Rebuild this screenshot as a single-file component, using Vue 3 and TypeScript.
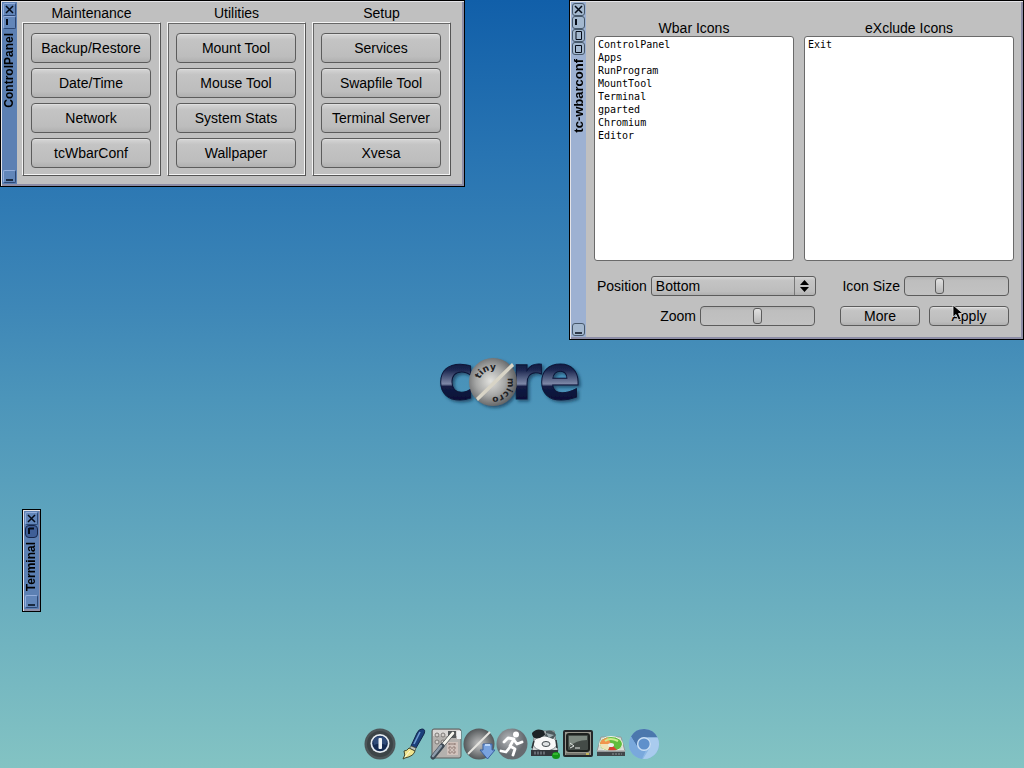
<script setup lang="ts">
import { ref } from 'vue'

interface Group {
  title: string
  tools: string[]
}

const groups: Group[] = [
  { title: 'Maintenance', tools: ['Backup/Restore', 'Date/Time', 'Network', 'tcWbarConf'] },
  { title: 'Utilities', tools: ['Mount Tool', 'Mouse Tool', 'System Stats', 'Wallpaper'] },
  { title: 'Setup', tools: ['Services', 'Swapfile Tool', 'Terminal Server', 'Xvesa'] },
]

const included = ['ControlPanel', 'Apps', 'RunProgram', 'MountTool', 'Terminal', 'gparted', 'Chromium', 'Editor']
const excluded = ['Exit']

const position = ref('Bottom')
const zoom = ref(50)
const iconSize = ref(32)
</script>

<template>
  <main class="desktop">
    <svg class="logo" viewBox="0 -10 150 80" role="img" aria-label="Tiny Core">
      <defs>
        <linearGradient id="steel" gradientUnits="userSpaceOnUse" x1="0" y1="6" x2="0" y2="46">
          <stop offset="0" stop-color="#0c1538" />
          <stop offset=".25" stop-color="#1c2750" />
          <stop offset=".6" stop-color="#7e89a8" />
          <stop offset=".66" stop-color="#141d44" />
          <stop offset="1" stop-color="#060e36" />
        </linearGradient>
        <radialGradient id="ball" cx=".45" cy=".48" r=".56">
          <stop offset="0" stop-color="#e2e2de" />
          <stop offset=".55" stop-color="#a5a6a5" />
          <stop offset="1" stop-color="#5c5e60" />
        </radialGradient>
        <filter id="soft" x="-10%" y="-10%" width="130%" height="140%">
          <feDropShadow dx="2" dy="2" stdDeviation="1.5" flood-color="#0c2f4d" flood-opacity=".65" />
        </filter>
        <path id="arc-top" d="M43 25 A14 14 0 0 1 70 28" />
        <path id="arc-bottom" d="M70 24 A14 14 0 0 1 50 41" />
      </defs>
      <g filter="url(#soft)">
        <text class="word" x="1" y="45">c</text>
        <text class="word" x="74" y="45">r</text>
        <text class="word" x="102" y="45">e</text>
        <circle cx="56" cy="28" r="24" fill="url(#ball)" />
        <path d="M39 44 L75 9 L77 12 L41 47 Z" fill="#d8d4c6" />
      </g>
      <text class="ring"><textPath href="#arc-top">tiny</textPath></text>
      <text class="ring"><textPath href="#arc-bottom">micro</textPath></text>
    </svg>

    <section class="window control" aria-label="ControlPanel">
      <header class="bar">
        <button class="tool" aria-label="Close"><svg viewBox="1 1 11 11"><path d="M3 3 L10 10 M10 3 L3 10" /></svg></button>
        <button class="tool" aria-label="Iconify"><svg viewBox="1 1 11 11"><path d="M4 3 V9" stroke-width="2" /></svg></button>
        <h1>ControlPanel</h1>
        <button class="tool foot" aria-label="Resize"><svg viewBox="1 1 11 11"><path d="M3 10 H10" /></svg></button>
      </header>
      <div class="groups">
        <section v-for="g in groups" :key="g.title" class="group">
          <h2>{{ g.title }}</h2>
          <div class="frame">
            <button v-for="t in g.tools" :key="t" class="push">{{ t }}</button>
          </div>
        </section>
      </div>
    </section>

    <section class="window wbar" aria-label="tc-wbarconf">
      <header class="bar active">
        <button class="tool" aria-label="Close"><svg viewBox="1 1 11 11"><path d="M3 3 L10 10 M10 3 L3 10" /></svg></button>
        <button class="tool" aria-label="Iconify"><svg viewBox="1 1 11 11"><path d="M4 3 V9" stroke-width="2" /></svg></button>
        <button class="tool" aria-label="Maximize height"><svg viewBox="1 1 11 11"><path d="M4 2.500 H9.500 V10.500 H4 Z" stroke-width="1" /></svg></button>
        <button class="tool" aria-label="Maximize"><svg viewBox="1 1 11 11"><path d="M3.500 3.500 H9.500 V10.500 H3.500 Z" stroke-width="1" /></svg></button>
        <h1>tc-wbarconf</h1>
        <button class="tool foot" aria-label="Resize"><svg viewBox="1 1 11 11"><path d="M3 10 H10" /></svg></button>
      </header>
      <form class="conf" @submit.prevent>
        <div class="lists">
          <div class="list">
            <label for="included">Wbar Icons</label>
            <select id="included" multiple size="17">
              <option v-for="i in included" :key="i">{{ i }}</option>
            </select>
          </div>
          <div class="list wide">
            <label for="excluded">eXclude Icons</label>
            <select id="excluded" multiple size="17">
              <option v-for="i in excluded" :key="i">{{ i }}</option>
            </select>
          </div>
        </div>
        <div class="row">
          <label for="position">Position</label>
          <span class="choice">
            <select id="position" v-model="position">
              <option>Bottom</option>
              <option>Top</option>
              <option>Left</option>
              <option>Right</option>
            </select>
            <svg viewBox="0 0 20 18" aria-hidden="true"><path d="M5 8 L9.500 3 L14 8 Z M5 10 L9.500 15 L14 10 Z" /></svg>
          </span>
          <label class="push-right" for="size">Icon Size</label>
          <input id="size" v-model.number="iconSize" class="narrow" type="range" min="0" max="100" />
        </div>
        <div class="row second">
          <label class="zoom-label" for="zoom">Zoom</label>
          <input id="zoom" v-model.number="zoom" type="range" min="0" max="100" />
          <span class="actions">
            <button class="push" type="button">More</button>
            <button class="push" type="submit">Apply</button>
          </span>
        </div>
      </form>
      <svg class="pointer" viewBox="0 0 12 18" aria-hidden="true">
        <path d="M1 1 V13 L4 10.500 L6.500 16 L9 15 L6.500 9.500 H11 Z" fill="#000" stroke="#e8e8e8" stroke-width=".8" />
      </svg>
    </section>

    <section class="window terminal" aria-label="Terminal">
      <header class="bar">
        <button class="tool" aria-label="Close"><svg viewBox="1 1 11 11"><path d="M3 3 L10 10 M10 3 L3 10" /></svg></button>
        <button class="tool pressed" aria-label="Restore"><svg viewBox="1 1 11 11"><path d="M4 3 V9 M4 3.500 H9" stroke-width="2" /></svg></button>
        <h1>Terminal</h1>
        <button class="tool foot" aria-label="Resize"><svg viewBox="1 1 11 11"><path d="M3 10 H10" /></svg></button>
      </header>
    </section>

    <nav class="dock" aria-label="Wbar">
      <button aria-label="Exit">
        <svg viewBox="0 0 32 32">
          <circle cx="16" cy="16" r="15.500" fill="#4d5659" />
          <circle cx="16" cy="16" r="13" fill="#3c4447" />
          <circle cx="16" cy="15.500" r="9.500" fill="#e4eaf0" />
          <circle cx="16" cy="15.500" r="7.800" fill="#142a52" />
          <path d="M9 13 A7.500 7.500 0 0 1 23 13 L22 17 Q16 14 10 17 Z" fill="#304b78" />
          <rect x="14.500" y="10" width="3.500" height="11" rx="1" fill="#eff3f6" />
        </svg>
      </button>
      <button aria-label="Editor">
        <svg viewBox="0 0 32 32">
          <path d="M25 1 Q29 1 27 6 L19 20 L14 18 L20 5 Q22 1 25 1 Z" fill="#1c3f7c" stroke="#12264a" />
          <path d="M23 4 L17 16" stroke="#6f9bd0" stroke-width="1.500" />
          <path d="M14 18 L19 20 L18 23 L12.500 20.500 Z" fill="#bfc3bd" stroke="#4b4d3c" stroke-width=".7" />
          <path d="M12 20 L18 23 Q17 28 8 30 L6 31 Q9 27 7 23 Q10 23 12 20 Z" fill="#efe48e" stroke="#44482f" />
          <path d="M13 23 L8 29" stroke="#fffbe0" />
        </svg>
      </button>
      <button aria-label="ControlPanel">
        <svg viewBox="0 0 32 32">
          <rect x="2" y="1" width="29" height="29" rx="2" fill="#b4b1ae" stroke="#5c5c5d" />
          <path d="M3 2 H30 V8 H3 Z" fill="#d9d7d5" />
          <rect x="18" y="3" width="8" height="7" fill="#54585a" />
          <rect x="27" y="3" width="4" height="8" fill="#edf0f2" />
          <g fill="#d4d0cd" stroke="#7d7976"><circle cx="7" cy="7" r="2" /><circle cx="13" cy="7" r="2" /><circle cx="7" cy="14" r="2" /><circle cx="13" cy="14" r="2" /></g>
          <rect x="17" y="14" width="11" height="13" fill="#d0c2bc" />
          <path d="M18 16 H27 M18 20 H27 M18 24 H27 M20 15 V27 M24 15 V27" stroke="#8f7a74" stroke-dasharray="2 1" />
          <path d="M23 5 L12 18" stroke="#34383a" stroke-width="4" stroke-linecap="round" />
          <path d="M23 5 L12 18" stroke="#f5f5ee" stroke-width="2.800" stroke-linecap="round" />
          <path d="M12 18 L3 29" stroke="#3d4954" stroke-width="5" stroke-linecap="round" />
          <path d="M11 18 L3 28" stroke="#8d9baa" stroke-width="2.500" stroke-linecap="round" />
        </svg>
      </button>
      <button aria-label="Apps">
        <svg viewBox="0 0 32 32">
          <defs><radialGradient id="apps-ball"><stop offset="0" stop-color="#c4c4c4" /><stop offset="1" stop-color="#54585a" /></radialGradient></defs>
          <circle cx="16" cy="16" r="15.500" fill="url(#apps-ball)" />
          <path d="M5 26 L27 4" stroke="#e5e4df" stroke-width="2" />
          <path d="M20 16 H29 V22 H32 L24.500 31 L17 22 H20 Z" fill="#79a3df" stroke="#3a609f" />
          <path d="M22 17 H27" stroke="#b9d5fa" stroke-width="2" />
        </svg>
      </button>
      <button aria-label="RunProgram">
        <svg viewBox="0 0 32 32">
          <defs><radialGradient id="run-ball" cx=".4" cy=".35"><stop offset="0" stop-color="#b7b9bc" /><stop offset="1" stop-color="#666b70" /></radialGradient></defs>
          <circle cx="16" cy="16" r="15.500" fill="url(#run-ball)" />
          <circle cx="20" cy="6.500" r="3" fill="#fff" />
          <path d="M18 11 L14 18 L19 21 L17 27 M14 19 L10 24 L5 23 M18 11 L12 10 L8 14 M18 12 L21 16 L26 14" fill="none" stroke="#fff" stroke-width="2.800" stroke-linecap="round" stroke-linejoin="round" />
        </svg>
      </button>
      <button aria-label="MountTool">
        <svg viewBox="0 0 32 32">
          <path d="M6 3 H25 L29 23 H3 Z" fill="#d3d6d7" stroke="#747b7e" />
          <ellipse cx="16" cy="15.500" rx="12" ry="7.500" fill="#f8f8f8" stroke="#7c8588" />
          <ellipse cx="17" cy="16" rx="4" ry="2.500" fill="#dfe2e3" stroke="#41484b" />
          <path d="M3 5 Q7 0 13 2 Q16 3 16 7 L11 10 Q3 12 3 5 Z" fill="#1d2326" />
          <path d="M17 3 Q24 1 27 7 L24 11 L16 8 Z" fill="#4b575b" />
          <path d="M17 5 L25 7 L20 10 Z" fill="#9caaae" />
          <path d="M5 13 L3 20 M27 12 L28 20" stroke="#2b3235" stroke-width="1.500" />
          <path d="M2 22 H29 V28 H2 Z" fill="#33363b" />
          <path d="M5 25 H17" stroke="#666b72" stroke-width="3" stroke-dasharray="2 1" />
          <ellipse cx="27" cy="27.500" rx="4" ry="3.500" fill="#129617" />
          <path d="M24 26 H29" stroke="#58d64e" />
        </svg>
      </button>
      <button aria-label="Terminal">
        <svg viewBox="0 0 32 32">
          <rect x="2" y="3" width="28" height="25" rx="1" fill="#99978f" stroke="#24272a" stroke-width="2" />
          <rect x="5" y="6" width="22" height="17" rx="2" fill="#444b47" stroke="#1e211f" stroke-width="2" />
          <path d="M7 8 H25 V12 Q14 12 7 19 Z" fill="#7e8981" />
          <path d="M8 15 L12 18 L8 20 M13 20 H18" fill="none" stroke="#e4e9e5" />
          <path d="M4 26 H28" stroke="#4f504b" />
          <rect x="24" y="25" width="3" height="2" fill="#c4b55b" />
        </svg>
      </button>
      <button aria-label="gparted">
        <svg viewBox="0 0 32 32">
          <path d="M6 9 H26 L30 23 H2 Z" fill="#dcded9" stroke="#929a9a" />
          <ellipse cx="16" cy="16" rx="11.500" ry="7.500" fill="#61bd3d" stroke="#f0f2ea" />
          <path d="M16 16 L5 16 A11 7 0 0 1 13 9.500 Z" fill="#f1944e" />
          <path d="M16 16 L5 16 A11 7 0 0 0 13 22.500 Z" fill="#efe3b8" />
          <path d="M16 16 L13 22.500 A11 7 0 0 0 22 22 Z" fill="#d64231" />
          <path d="M10 13 Q15 9 23 13" fill="none" stroke="#ccec8e" stroke-width="2" />
          <ellipse cx="16" cy="17" rx="3" ry="2" fill="#ecefec" />
          <path d="M2 22.500 H30 V28 H2 Z" fill="#41474a" />
          <path d="M2 23 H30" stroke="#eceeee" />
          <path d="M17 26 H27" stroke="#8a9294" stroke-dasharray="2 1" />
        </svg>
      </button>
      <button aria-label="Chromium">
        <svg viewBox="0 0 32 32">
          <circle cx="16" cy="16" r="15" fill="#8cb8e5" />
          <path d="M3 8.500 A15 15 0 0 1 29.500 9.500 L16 9.500 A7 7 0 0 0 10 20 Z" fill="#4b77ad" />
          <path d="M29.500 9.500 A15 15 0 0 1 15 31 L22 19.500 A7 7 0 0 0 19 9.500 Z" fill="#a9cbee" />
          <path d="M3 8.500 L10 20 Q14 24 18 22 L14 31 A15 15 0 0 1 3 8.500 Z" fill="#79a8dc" />
          <circle cx="16" cy="16" r="7" fill="#c9def4" />
          <circle cx="16" cy="16" r="5.600" fill="#5f90cb" />
        </svg>
      </button>
    </nav>
  </main>
</template>

<style>
body {
  margin: 0;
}
</style>

<style scoped>
.desktop {
  position: relative;
  box-sizing: border-box;
  min-height: 100vh;
  display: grid;
  place-items: center;
  overflow: hidden;
  background: linear-gradient(#115fa9, #2874b2 20%, #3e87b7 40%, #4c95ba 52%, #83c3c3);
  font-family: "Liberation Sans", Arial, sans-serif;
  font-size: 14px;
  color: #000;
}

button,
select,
input {
  font: inherit;
  color: inherit;
  margin: 0;
}

h1,
h2 {
  margin: 0;
  font-size: 14px;
  font-weight: normal;
}

.logo {
  width: 150px;
  height: 80px;
}

.word {
  font: bold 62px "DejaVu Sans", sans-serif;
  fill: url(#steel);
  stroke: #0b1437;
  stroke-width: 1px;
}

.ring {
  font: bold 9px "DejaVu Sans", sans-serif;
  fill: #1e2124;
}

.window {
  position: absolute;
  display: flex;
  box-sizing: border-box;
  border: 1px solid #000;
  background: #c0c0c0;
  box-shadow: inset 1px 1px #e4e4e8, inset -2px -2px #8d8da6;
}

.control {
  left: 0;
  top: 0;
}

.wbar {
  right: 0;
  top: 0;
  width: 455px;
}

.terminal {
  left: 22px;
  top: 509px;
  height: 103px;
}

.bar {
  display: flex;
  flex-direction: column;
  align-items: center;
  box-sizing: border-box;
  width: 15px;
  margin: 1px 0 2px 1px;
  padding: 1px 0;
  background: #5c80b3;
}

.bar.active {
  background: #9db1d2;
}

.terminal .bar {
  margin-right: 1px;
}

.bar h1 {
  margin-top: 4px;
  writing-mode: vertical-rl;
  transform: rotate(180deg);
  font-size: 12px;
  font-weight: bold;
  line-height: 15px;
}

.bar.active h1 {
  font-size: 13px;
}

.tool {
  box-sizing: border-box;
  width: 13px;
  height: 13px;
  padding: 0;
  border: 1px solid;
  border-color: #93addb #2d4774 #2d4774 #93addb;
  border-radius: 2px;
  background: #6286b9;
}

.tool svg {
  display: block;
  width: 11px;
  height: 11px;
  fill: none;
  stroke: #050b18;
  stroke-width: 1.5;
}

.active .tool {
  border-color: #47586b;
  border-radius: 3px;
  background: #a4b8cf;
}

.tool.pressed {
  border-color: #16264a;
  border-radius: 4px;
  background: #3f5f97;
}

.tool.foot {
  margin-top: auto;
}

.groups {
  display: flex;
  gap: 6px;
  padding: 4px 13px 10px 5px;
}

.group {
  text-align: center;
}

.group h2 {
  line-height: 17px;
}

.frame {
  display: flex;
  flex-direction: column;
  gap: 5px;
  padding: 10px 9px 7px 8px;
  border: 1px solid;
  border-color: #f4f4f4 #555 #555 #f4f4f4;
  box-shadow: inset 1px 1px #666, inset -1px -1px #f4f4f4;
}

.push {
  box-sizing: border-box;
  width: 120px;
  height: 30px;
  padding: 0;
  border: 1px solid #5c5c5c;
  border-radius: 4px;
  background: linear-gradient(#d6d6d6, #c4c4c4 20%, #bdbdbd 80%, #b0b0b0);
  box-shadow: inset 0 1px #dedede;
}

.conf {
  flex: 1;
  padding: 19px 9px 13px 8px;
}

.lists {
  display: flex;
  gap: 10px;
}

.list {
  display: flex;
  flex-direction: column;
  flex: 200;
  text-align: center;
}

.list.wide {
  flex: 210;
}

.list label {
  line-height: 16px;
}

.list select {
  box-sizing: border-box;
  width: 100%;
  height: 225px;
  padding: 2px 3px;
  overflow: hidden;
  border: 1px solid #6a6a6a;
  border-radius: 3px;
  background: #fff;
  font: 10px "DejaVu Sans Mono", monospace;
}

.list option {
  min-height: 13px;
  padding: 0;
  line-height: 13px;
}

.row {
  display: flex;
  align-items: center;
  gap: 4px;
  height: 21px;
  margin-top: 14px;
  padding: 0 5px 0 3px;
}

.row.second {
  margin-top: 9px;
}

.row label {
  white-space: nowrap;
}

.choice {
  position: relative;
  width: 165px;
  height: 20px;
}

.choice select {
  appearance: none;
  box-sizing: border-box;
  width: 100%;
  height: 20px;
  padding: 0 24px 0 4px;
  border: 1px solid #5c5c5c;
  border-radius: 3px;
  background: linear-gradient(#d6d6d6, #c4c4c4 20%, #bdbdbd 80%, #b0b0b0);
}

.choice svg {
  position: absolute;
  top: 1px;
  right: 1px;
  width: 20px;
  height: 18px;
  border-left: 1px solid #777;
  pointer-events: none;
}

.push-right {
  margin-left: auto;
}

input[type="range"] {
  appearance: none;
  box-sizing: border-box;
  width: 115px;
  height: 20px;
  border: 1px solid #5c5c5c;
  border-radius: 4px;
  background: linear-gradient(#b2b2b2, #bebebe 20%, #c2c2c2);
}

input[type="range"].narrow {
  width: 105px;
}

input[type="range"]::-webkit-slider-thumb {
  appearance: none;
  box-sizing: border-box;
  width: 9px;
  height: 16px;
  border: 1px solid #5c5c5c;
  border-radius: 3px;
  background: linear-gradient(#e0e0e0, #b8b8b8);
}

.zoom-label {
  width: 99px;
  text-align: right;
}

.actions {
  display: flex;
  gap: 9px;
  margin-left: auto;
}

.actions .push {
  width: 80px;
  height: 20px;
}

.pointer {
  position: absolute;
  right: 59px;
  bottom: 17px;
  width: 12px;
  height: 18px;
}

.dock {
  position: absolute;
  right: 0;
  bottom: 8px;
  left: 0;
  display: flex;
  justify-content: center;
  gap: 1px;
}

.dock button {
  width: 32px;
  height: 32px;
  padding: 0;
  border: 0;
  background: none;
}

.dock svg {
  display: block;
  width: 32px;
  height: 32px;
}
</style>
